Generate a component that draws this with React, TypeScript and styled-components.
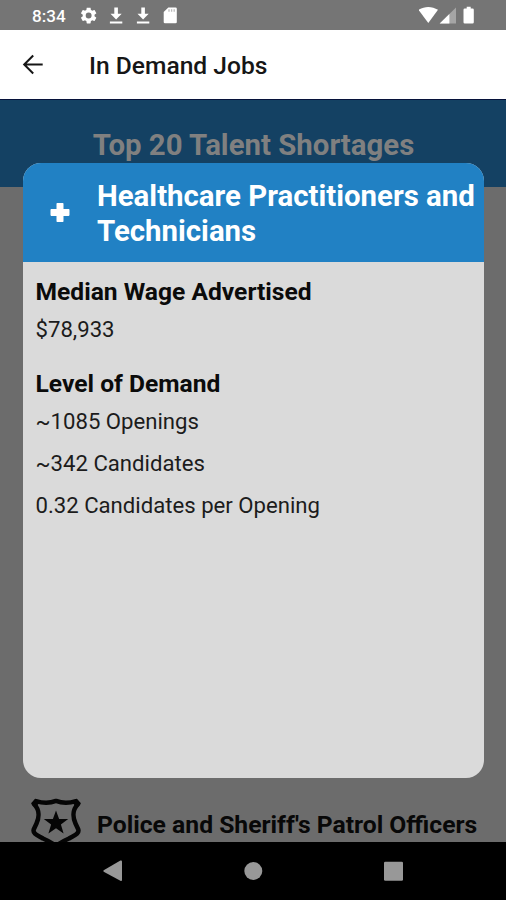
import React from 'react';
import styled, { createGlobalStyle } from 'styled-components';

const GlobalStyle = createGlobalStyle`
  * { box-sizing: border-box; }
  body { margin: 0; background: #000; font-family: Roboto, 'Liberation Sans', sans-serif; overflow: hidden; }
  h1, h2, h3, p { margin: 0; }
`;

const Screen = styled.div`
  position: relative;
  display: flex;
  flex-direction: column;
  width: 506px;
  height: 900px;
  overflow: hidden;
`;

const StatusBar = styled.header`
  display: flex;
  justify-content: space-between;
  flex: none;
  height: 30px;
  padding: 0 29px 0 32px;
  background: #757575;
  color: #fff;
`;

const Clock = styled.span`
  width: 49px;
  font-size: 17.1px;
  font-weight: 500;
  line-height: 32px;
`;

const StatusGroup = styled.div`
  display: flex;
  svg { display: block; }
`;

const AppBar = styled.div`
  display: flex;
  align-items: center;
  flex: none;
  height: 70px;
  padding: 1px 0 0 20px;
  background: #fff;
  border-bottom: 1px solid #06123a;
`;

const AppTitle = styled.h1`
  margin: 1px 0 0 43px;
  color: #161616;
  font-size: 24.6px;
  font-weight: 500;
  line-height: 32px;
`;

const Content = styled.main`
  display: flex;
  flex-direction: column;
  justify-content: space-between;
  flex: 1;
  min-height: 0;
  overflow: hidden;
  background: #6c6c6c;
`;

const Banner = styled.div`
  height: 87px;
  padding: 27px 0 0 1px;
  background: #144163;
  color: #808080;
  text-align: center;
`;

const BannerTitle = styled.h2`
  font-size: 29.4px;
  font-weight: 700;
  line-height: 36px;
`;

const JobRow = styled.div`
  display: flex;
  height: 46px;
  padding-left: 29px;
`;

const JobName = styled.span`
  margin: 14px 0 0 14px;
  font-size: 24.7px;
  font-weight: 700;
  line-height: 30px;
  color: #080808;
  white-space: nowrap;
`;

const Modal = styled.section`
  position: absolute;
  top: 163px;
  left: 23px;
  width: 461px;
  height: 614.5px;
  overflow: hidden;
  border-radius: 18px;
  background: #dadada;
`;

const ModalHeader = styled.div`
  display: flex;
  align-items: center;
  height: 99px;
  padding-left: 27px;
  background: #2181c4;
  color: #fff;
`;

const ModalTitle = styled.h2`
  margin: 3px 0 0 27px;
  font-size: 29.4px;
  font-weight: 700;
  line-height: 35px;
  white-space: nowrap;
`;

const ModalBody = styled.div`
  padding: 15px 12.5px;
`;

const Section = styled.div`
  margin-bottom: 26px;
`;

const SectionTitle = styled.h3`
  margin-bottom: 8px;
  font-size: 24.6px;
  font-weight: 700;
  line-height: 30px;
  color: #0b0b0b;
`;

const Detail = styled.p`
  margin-bottom: 14px;
  font-size: 22.15px;
  line-height: 28px;
  color: #1c1c1c;
`;

const NavBar = styled.nav`
  display: flex;
  justify-content: center;
  align-items: center;
  gap: 120px;
  flex: none;
  height: 58px;
  background: #000;
  color: #989898;
  svg { display: block; fill: currentColor; }
`;

const DownloadIcon = () => (
  <svg width="27" height="30" viewBox="0 0 27 30" fill="#fff">
    <path d="M12.3 7.5h3.6v6.3h3.8L14.1 19.6 8.5 13.8h3.8zM7.9 21.5h12.4v2.1H7.9z" />
  </svg>
);

const sections = [
  { title: 'Median Wage Advertised', details: ['$78,933'] },
  { title: 'Level of Demand', details: ['~1085 Openings', '~342 Candidates', '0.32 Candidates per Opening'] },
];

export default function App() {
  return (
    <>
      <GlobalStyle />
      <Screen>
        <StatusBar>
          <StatusGroup>
            <Clock>8:34</Clock>
            <svg width="21" height="30" viewBox="0 0 21 30">
              <g transform="translate(-2.2 5.7) scale(.82)">
                <path fill="#fff" d="M19.14 12.94c.04-.3.06-.61.06-.94s-.02-.64-.07-.94l2.03-1.58c.18-.14.23-.41.12-.61l-1.92-3.32c-.12-.22-.37-.29-.59-.22l-2.39.96c-.5-.38-1.03-.7-1.62-.94l-.36-2.54c-.04-.24-.24-.41-.48-.41h-3.84c-.24 0-.43.17-.47.41l-.36 2.54c-.59.24-1.13.57-1.62.94l-2.39-.96c-.22-.08-.47 0-.59.22L2.74 8.87c-.12.21-.08.47.12.61l2.03 1.58c-.05.3-.09.63-.09.94s.02.64.07.94l-2.03 1.58c-.18.14-.23.41-.12.61l1.92 3.32c.12.22.37.29.59.22l2.39-.96c.5.38 1.03.7 1.62.94l.36 2.54c.05.24.24.41.48.41h3.84c.24 0 .44-.17.47-.41l.36-2.54c.59-.24 1.13-.56 1.62-.94l2.39.96c.22.08.47 0 .59-.22l1.92-3.32c.12-.22.07-.47-.12-.61zM12 15.6A3.6 3.6 0 1 1 12 8.4a3.6 3.6 0 0 1 0 7.2z" />
              </g>
            </svg>
            <DownloadIcon />
            <DownloadIcon />
            <svg width="22" height="30" viewBox="0 0 22 30">
              <path fill="#fff" d="M12.3 7.5h7.2a1.3 1.3 0 0 1 1.3 1.3v13.2a1.3 1.3 0 0 1-1.3 1.3H9A1.3 1.3 0 0 1 7.7 22V12z" />
              <path d="M13 9.3v2.5M15.6 9.3v2.5M18.2 9.3v2.5" stroke="#bbb" strokeWidth="1.3" />
            </svg>
          </StatusGroup>
          <StatusGroup>
            <svg width="58" height="30" viewBox="0 0 58 30" fill="#fff">
              <path d="M-.5 9.8C5.5 5.9 13 5.9 19 9.8L9.3 22.9z" />
              <path d="M20.7 23.4 37 7.5v15.9z" fill="#a5a5a5" />
              <path d="M20.7 23.4 30.4 13.9v9.5z" />
              <path d="M47.7 6.7h4v1.8h1.8a1.3 1.3 0 0 1 1.3 1.3v12.5a1.3 1.3 0 0 1-1.3 1.3h-7.7a1.3 1.3 0 0 1-1.3-1.3V9.8a1.3 1.3 0 0 1 1.3-1.3h1.9z" />
            </svg>
          </StatusGroup>
        </StatusBar>
        <AppBar>
          <svg width="26" height="26" viewBox="0 0 26 26" fill="none" stroke="#161616" strokeWidth="2">
            <path d="M22.7 12.5H4M13.2 3.5 4.2 12.5l9 9" />
          </svg>
          <AppTitle>In Demand Jobs</AppTitle>
        </AppBar>
        <Content>
          <Banner>
            <BannerTitle>Top 20 Talent Shortages</BannerTitle>
          </Banner>
          <JobRow>
            <svg width="54" height="46" viewBox="0 0 54 46">
              <path fill="none" stroke="#050505" strokeWidth="4.5" strokeLinejoin="round" d="M7 5.2Q18 8.6 27 4.9Q36 8.6 47 5.2L49 8.2C43 14 44 22 46.5 27.5L49.3 33.5C50.5 38 45 39.5 40 42.5Q33 45.5 27 50Q21 45.5 14 42.5C9 39.5 3.5 38 4.7 33.5L7.5 27.5C10 22 11 14 5 8.2z" />
              <path fill="#050505" d="M2 7.2 6.5 2.6 10 7.6 6 11.6zM52 7.2 47.5 2.6 44 7.6 48 11.6zM27 14.4 30.1 22.9H39.2L31.9 28.5 34.6 37.4 27 32.3 19.4 37.4 22.1 28.5 14.8 22.9H23.9z" />
            </svg>
            <JobName>Police and Sheriff's Patrol Officers</JobName>
          </JobRow>
        </Content>
        <NavBar>
          <svg width="20" height="22" viewBox="0 0 20 22"><path d="M.7 10.3 17.4.6Q18.8 0 19 1.2V20q-.2 1.3-1.6.7L.7 11.7Q0 11 .7 10.3z" /></svg>
          <svg width="20" height="20" viewBox="0 0 20 20"><circle cx="10.3" cy="10" r="9" /></svg>
          <svg width="20" height="20" viewBox="0 0 20 20"><rect x="1" y=".7" width="19" height="19" rx="1.3" /></svg>
        </NavBar>
        <Modal>
          <ModalHeader>
            <svg width="20" height="20" viewBox="0 0 20 20">
              <path fill="#fff" d="M7.3 0h5.4q.8 0 .8.8v5.3h5.2q.8 0 .8.8v5.2q0 .8-.8.8h-5.2v5.3q0 .8-.8.8H7.3q-.8 0-.8-.8v-5.3H1.3q-.8 0-.8-.8V6.9q0-.8.8-.8h5.2V.8q0-.8.8-.8z" />
            </svg>
            <ModalTitle>Healthcare Practitioners and<br />Technicians</ModalTitle>
          </ModalHeader>
          <ModalBody>
            {sections.map(({ title, details }) => (
              <Section key={title}>
                <SectionTitle>{title}</SectionTitle>
                {details.map((detail) => <Detail key={detail}>{detail}</Detail>)}
              </Section>
            ))}
          </ModalBody>
        </Modal>
      </Screen>
    </>
  );
}
